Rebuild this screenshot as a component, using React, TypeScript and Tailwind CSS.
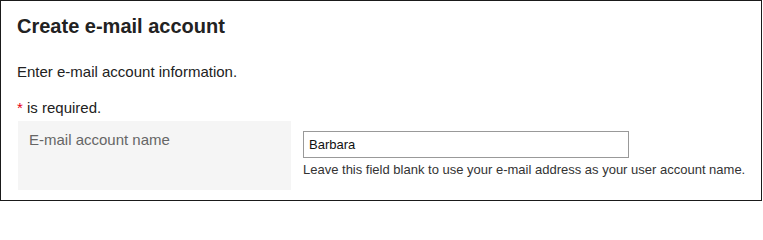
export default function App() {
  return (
    <div
      className="w-[762px] h-[201px] border border-[#1a1a1a] bg-white pl-[16px] pt-[13px] text-[#222]"
      style={{ fontFamily: '"Liberation Sans", Arial, sans-serif' }}
    >
      <h1 className="text-[20px] leading-[24px] font-bold">Create e-mail account</h1>
      <p className="mt-[24px] text-[15px] leading-[20px]">Enter e-mail account information.</p>
      <p className="mt-[16px] text-[15px] leading-[20px]">
        <span className="text-[#e60012]">*</span> is required.
      </p>
      <div className="mt-[3px] ml-[1px] flex">
        <div className="w-[273px] h-[69px] bg-[#f5f5f5] pl-[11px] pt-[9px] text-[15px] leading-[20px] text-[#666]">
          E-mail account name
        </div>
        <div className="ml-[12px] pt-[10px]">
          <input
            type="text"
            defaultValue="Barbara"
            className="block w-[326px] h-[27px] border border-[#999] px-[5px] text-[13px] text-[#111] outline-none"
            style={{ fontFamily: '"Liberation Sans", Arial, sans-serif' }}
          />
          <p className="mt-[4px] text-[13px] leading-[16px] text-[#333]">
            Leave this field blank to use your e-mail address as your user account name.
          </p>
        </div>
      </div>
    </div>
  );
}
